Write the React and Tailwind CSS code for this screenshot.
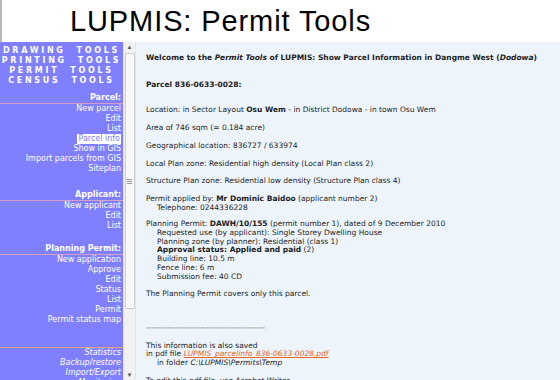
import React from 'react';

const VERDANA = { fontFamily: '"DejaVu Sans", Verdana, sans-serif' };

function SideItem({ children, active, italic }) {
  return (
    <div className="flex justify-end pr-[2px] h-[10px] leading-[10px] whitespace-nowrap">
      <span className={
        (active ? 'bg-white text-[#8080ff] px-[1px] ' : 'text-white ') + (italic ? 'italic' : '')
      }>
        {children}
      </span>
    </div>
  );
}

function SideHead({ children }) {
  return (
    <div>
      <div className="text-right pr-[2px] font-bold text-white h-[10px] leading-[10px]">{children}</div>
      <div className="h-[1px] bg-[#d2a0c8]" />
    </div>
  );
}

function Sidebar() {
  return (
    <div className="w-[123px] bg-[#8080ff] text-[8px] overflow-hidden" style={VERDANA}>
      <div className="pt-[4px] flex flex-col items-center font-bold text-white tracking-[2.7px] leading-[10px] whitespace-pre">
        <div>DRAWING  TOOLS</div>
        <div>PRINTING  TOOLS</div>
        <div>PERMIT  TOOLS</div>
        <div>CENSUS  TOOLS</div>
      </div>

      <div className="mt-[7px]">
        <SideHead>Parcel:</SideHead>
        <SideItem>New parcel</SideItem>
        <SideItem>Edit</SideItem>
        <SideItem>List</SideItem>
        <SideItem active>Parcel info</SideItem>
        <SideItem>Show in GIS</SideItem>
        <SideItem>Import parcels from GIS</SideItem>
        <SideItem>Siteplan</SideItem>
      </div>

      <div className="mt-[16px]">
        <SideHead>Applicant:</SideHead>
        <SideItem>New applicant</SideItem>
        <SideItem>Edit</SideItem>
        <SideItem>List</SideItem>
      </div>

      <div className="mt-[13px]">
        <SideHead>Planning Permit:</SideHead>
        <SideItem>New application</SideItem>
        <SideItem>Approve</SideItem>
        <SideItem>Edit</SideItem>
        <SideItem>Status</SideItem>
        <SideItem>List</SideItem>
        <SideItem>Permit</SideItem>
        <SideItem>Permit status map</SideItem>
      </div>

      <div className="mt-[22px] h-[1px] bg-[#e2a58a]" />
      <div>
        <SideItem italic>Statistics</SideItem>
        <SideItem italic>Backup/restore</SideItem>
        <SideItem italic>Import/Export</SideItem>
        <SideItem italic>Monitoring</SideItem>
      </div>
    </div>
  );
}

function Scrollbar() {
  return (
    <div className="w-[12px] bg-[#f1f1f1] border-l border-[#e4e4e4] flex flex-col items-center">
      <div className="h-[10px] text-[6px] leading-[10px] text-[#555]">▲</div>
      <div className="w-[10px] h-[256px] mt-[1px] bg-[#f8f8f8] border border-[#cfcfcf] rounded-[1px] flex items-center justify-center">
        <div className="flex flex-col gap-[1px]">
          <div className="w-[5px] h-[1px] bg-[#999]" />
          <div className="w-[5px] h-[1px] bg-[#999]" />
          <div className="w-[5px] h-[1px] bg-[#999]" />
        </div>
      </div>
      <div className="flex-1" />
      <div className="h-[10px] text-[6px] leading-[10px] text-[#555]">▼</div>
    </div>
  );
}

function Indent({ children, bold }) {
  return <div className={'pl-[11px]' + (bold ? ' font-bold' : '')}>{children}</div>;
}

function Content() {
  return (
    <div className="flex-1 bg-[#edf4fb] pl-[10px] pt-[12px] text-[7.5px] leading-[8.7px] text-[#1c1c1c] overflow-hidden border-l border-[#dfe6ee]" style={VERDANA}>
      <p className="font-bold">
        Welcome to the <i>Permit Tools</i> of LUPMIS: Show Parcel Information in Dangme West (<i>Dodowa</i>)
      </p>
      <p className="font-bold mt-[18px]">Parcel 836-0633-0028:</p>
      <p className="mt-[17px]">Location: in Sector Layout <b>Osu Wem</b> - in District Dodowa - in town Osu Wem</p>
      <p className="mt-[9px]">Area of 746 sqm (= 0.184 acre)</p>
      <p className="mt-[9px]">Geographical location: 836727 / 633974</p>
      <p className="mt-[9px]">Local Plan zone: Residential high density (Local Plan class 2)</p>
      <p className="mt-[9px]">Structure Plan zone: Residential low density (Structure Plan class 4)</p>
      <div className="mt-[9px]">
        <div>Permit applied by: <b>Mr Dominic Baidoo</b> (applicant number 2)</div>
        <Indent>Telephone: 0244336228</Indent>
      </div>
      <div className="mt-[8px]">
        <div>Planning Permit: <b>DAWH/10/155</b> (permit number 1), dated of 9 December 2010</div>
        <Indent>Requested use (by applicant): Single Storey Dwelling House</Indent>
        <Indent>Planning zone (by planner): Residential (class 1)</Indent>
        <div className="pl-[11px]"><b>Approval status: Applied and paid</b> (2)</div>
        <Indent>Building line: 10.5 m</Indent>
        <Indent>Fence line: 6 m</Indent>
        <Indent>Submission fee: 40 CD</Indent>
      </div>
      <p className="mt-[9px]">The Planning Permit covers only this parcel.</p>
      <p className="mt-[25px] text-[#555]">--------------------------------------------</p>
      <div className="mt-[9px]">
        <div>This information is also saved</div>
        <div>
          in pdf file <span className="italic underline text-[#e0662a]">LUPMIS_parcelinfo_836-0633-0028.pdf</span>
        </div>
        <div className="pl-[11px]">in folder <i>C:\LUPMIS\Permits\Temp</i></div>
      </div>
      <p className="mt-[9px]">To edit this pdf file, use Acrobat Writer</p>
    </div>
  );
}

export default function App() {
  return (
    <div className="w-[560px] h-[380px] bg-white flex flex-col overflow-hidden">
      <div className="h-[42px] flex border-l-2 border-[#b8b8b8]">
        <div
          className="pl-[68px] pt-[3px] text-[29px] leading-[36px] tracking-[0.9px] text-black"
          style={{ fontFamily: '"Liberation Sans", Arial, sans-serif' }}
        >
          LUPMIS: Permit Tools
        </div>
      </div>
      <div className="flex-1 flex min-h-0">
        <Sidebar />
        <Scrollbar />
        <Content />
      </div>
    </div>
  );
}
